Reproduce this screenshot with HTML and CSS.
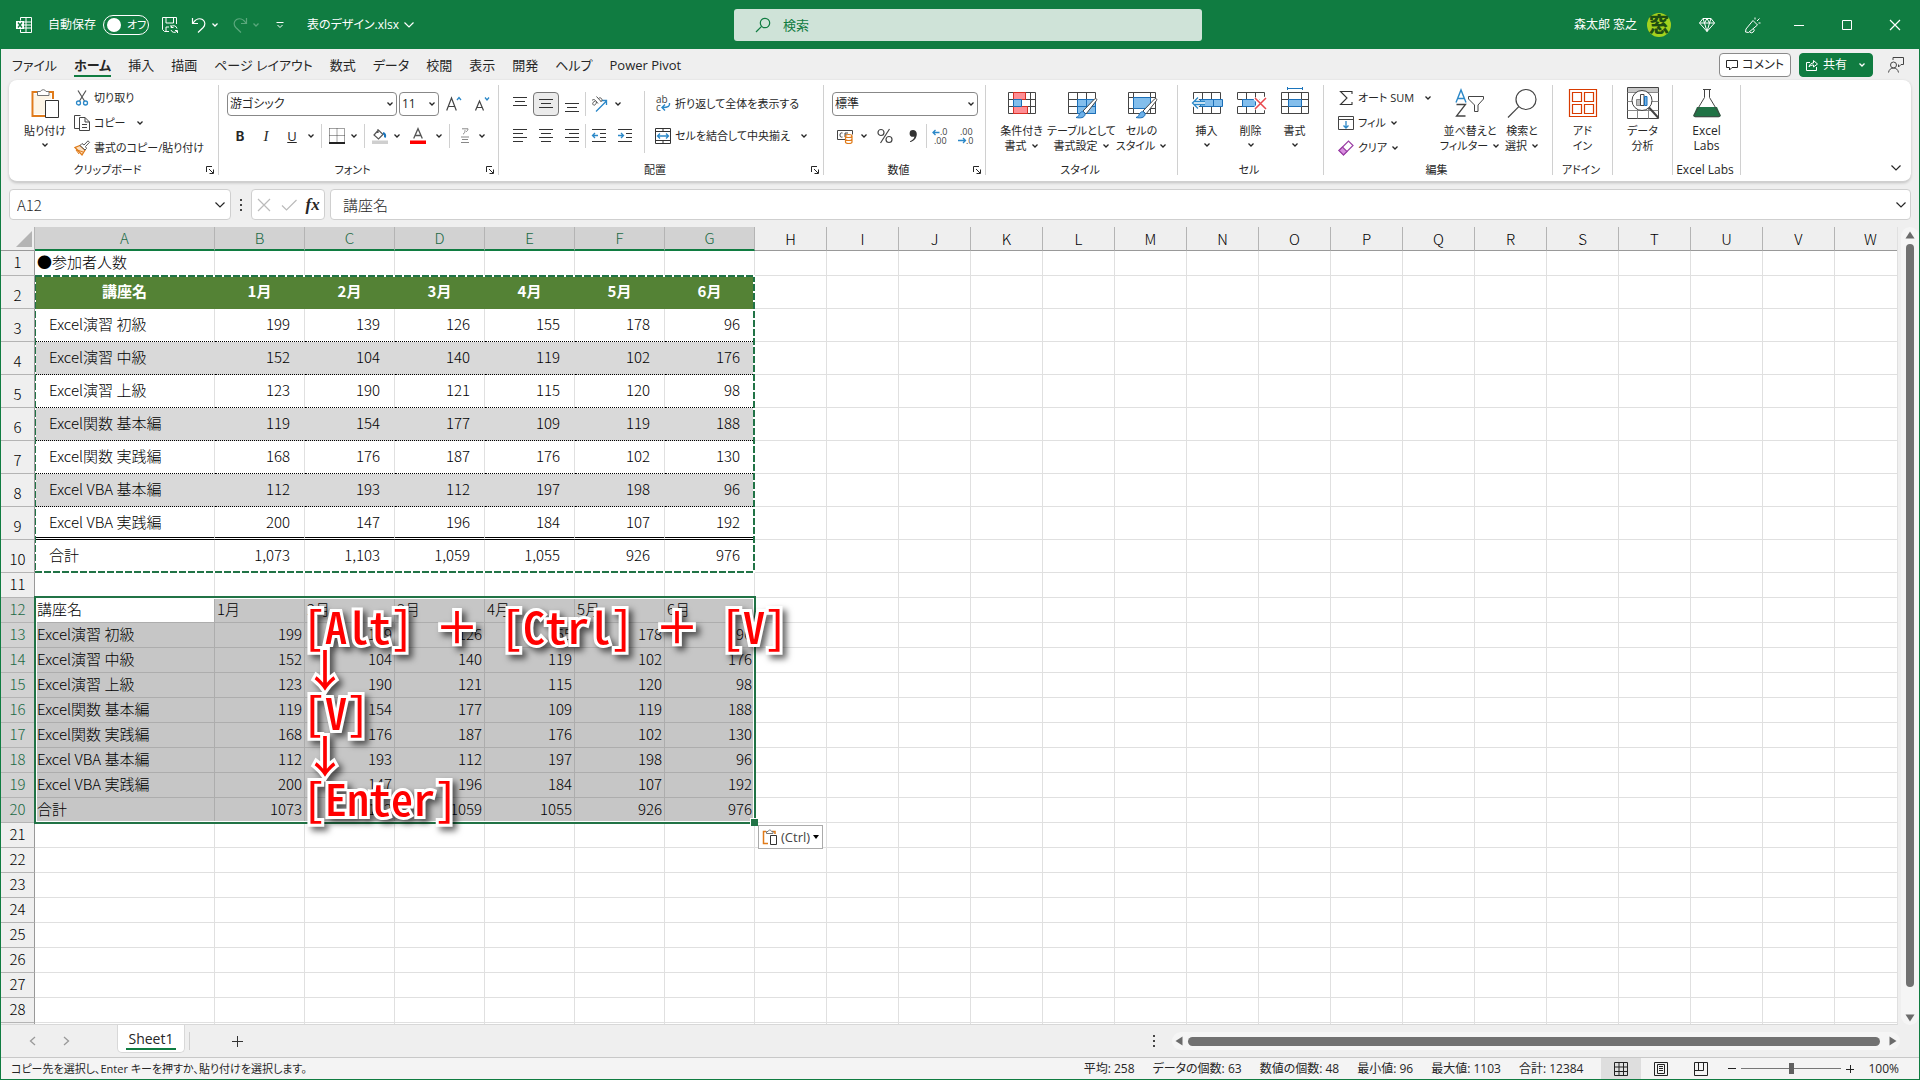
FILE: index.html
```html
<!DOCTYPE html>
<html lang="ja">
  <head>
    <meta charset="UTF-8">
    <meta name="viewport" content="width=device-width, initial-scale=1.0">
    <title>表のデザイン.xlsx</title>
    <link rel="stylesheet" href="styles.css">
  </head>
  <body>
    <!-- 共通アイコン -->
    <svg class="sprite" aria-hidden="true">
      <symbol id="chev" viewBox="0 0 8 8"><path d="M1.5 2.5 4 5l2.5-2.5" fill="none" stroke="currentColor" stroke-width="1.3"/></symbol>
      <symbol id="chev-l" viewBox="0 0 12 12"><path d="M1.5 3.5 6 8l4.5-4.5" fill="none" stroke="currentColor" stroke-width="1.2"/></symbol>
      <symbol id="launch" viewBox="0 0 8 8"><path d="M.5 6V.5H6M3 3l4 4M7.5 3.5v4h-4" fill="none" stroke="currentColor"/></symbol>
    </svg>

    <header class="titlebar">
      <div class="title-left">
        <svg class="i16" viewBox="0 0 16 16" fill="none" stroke="#fff"><path d="M4.500 3.500V.5h11v15h-11v-3M10 .5v15M4.500 5h11M6 8h9.500M4.500 11h11"/><path d="M0 4h8v8H0z" fill="#fff" stroke="none"/><path d="M2 5.500 6 10.500M6 5.500 2 10.500" stroke="#107c41" stroke-width="1.400"/></svg>
        <label class="autosave" for="autosave">自動保存
          <span class="switch"><input type="checkbox" id="autosave"><span class="knob"></span><span>オフ</span></span>
        </label>
        <button class="tb" aria-label="保存"><svg class="i16" viewBox="0 0 16 16" fill="none" stroke="#fff"><path d="M7 14.500H2.500l-2-2V.5h14V7M4 .5V6h7.500V.5M4 14.500V10h3"/><path d="M15 11.500a3.400 3.400 0 0 0-6-1.500M9 8v2.500h2.500M9 13a3.400 3.400 0 0 0 6 1M15.500 16v-2.500H13"/></svg></button>
        <button class="tb undo" aria-label="元に戻す"><svg class="i16" viewBox="0 0 16 16" fill="none" stroke="#fff" stroke-width="1.200"><path d="M1.500 1v5.500H7M1.800 6.300C5 1.500 9 1 11.500 2.500c3 2 3 5.500.7 8L7 15.500"/></svg><svg class="i8"><use href="#chev"/></svg></button>
        <button class="tb redo" aria-label="やり直し"><svg class="i16" viewBox="0 0 16 16" fill="none" stroke="currentColor" stroke-width="1.200"><path d="M14.500 1v5.500H9M14.200 6.300C11 1.500 7 1 4.500 2.500c-3 2-3 5.500-.7 8L9 15.500"/></svg><svg class="i8"><use href="#chev"/></svg></button>
        <button class="tb" aria-label="クイック アクセス"><svg class="i8" viewBox="0 0 8 8" fill="none" stroke="#fff"><path d="M.5 1.500h7M1.500 4 4 6.500 6.500 4"/></svg></button>
        <button class="tb filename">表のデザイン.xlsx<svg class="i12"><use href="#chev-l"/></svg></button>
      </div>
      <label class="search">
        <svg class="i16" viewBox="0 0 16 16" fill="none" stroke="#107c41" stroke-width="1.200"><circle cx="10" cy="6" r="4.700"/><path d="M6.600 9.400 1 15"/></svg>
        <input type="text" placeholder="検索" aria-label="検索">
      </label>
      <div class="title-right">
        <span class="user">森太郎 窓之</span>
        <span class="avatar">窓</span>
        <button class="tb cap" aria-label="プレミアム"><svg class="i16" viewBox="0 0 16 16" fill="none" stroke="#fff"><path d="M4 1.500h8L15.500 6 8 14.500.5 6zM.5 6h15M4 1.500 5.500 6 8 14.500 10.500 6 12 1.500M5.500 6 8 1.500 10.500 6"/></svg></button>
        <button class="tb cap" aria-label="新機能"><svg class="i16" viewBox="0 0 16 16" fill="none" stroke="#fff"><path d="M8 3.500 12.500 8 3.500 15.500.5 15l.5-3zM4.500 14.800a2.500 2.500 0 0 0 4-3.300M10 2.500V.5M12 4l2.500-2.500M13.500 6h2"/></svg></button>
        <button class="tb cap" aria-label="最小化"><svg class="i12" viewBox="0 0 12 12" stroke="#fff"><path d="M1 6.500h10"/></svg></button>
        <button class="tb cap" aria-label="元のサイズに戻す"><svg class="i12" viewBox="0 0 12 12" fill="none" stroke="#fff"><path d="M1.500 1.500h9v9h-9z"/></svg></button>
        <button class="tb cap" aria-label="閉じる"><svg class="i12" viewBox="0 0 12 12" stroke="#fff" stroke-width="1.200"><path d="M1 1l10 10M11 1 1 11"/></svg></button>
      </div>
    </header>

    <nav class="tabs">
      <a href="#">ファイル</a>
      <a href="#" class="on">ホーム</a>
      <a href="#">挿入</a>
      <a href="#">描画</a>
      <a href="#">ページ レイアウト</a>
      <a href="#">数式</a>
      <a href="#">データ</a>
      <a href="#">校閲</a>
      <a href="#">表示</a>
      <a href="#">開発</a>
      <a href="#">ヘルプ</a>
      <a href="#">Power Pivot</a>
      <div class="tabs-right">
        <button class="comment"><svg class="i12" viewBox="0 0 12 12" fill="none" stroke="currentColor"><path d="M.5 1.500h11v7H6L3.500 11V8.500h-3z"/></svg>コメント</button>
        <button class="share"><svg class="i12" viewBox="0 0 12 12" fill="none" stroke="currentColor"><path d="M4 3.500H.5v8h10V8M3 8c.5-3 2.500-4 4.500-4V1.500L11.500 5 7.500 8V6C5.500 6 4 6.500 3 8z"/></svg>共有<svg class="i8"><use href="#chev"/></svg></button>
        <button class="tb" aria-label="フィードバック"><svg class="i16" viewBox="0 0 16 16" fill="none" stroke="#444"><circle cx="5.500" cy="8" r="3"/><path d="M.5 15.500c.5-3 2.500-4.500 5-4.500s4.500 1.500 5 4.500M5 3V.5h10.500v7H13L10.500 10V7.500"/></svg></button>
      </div>
    </nav>

    <section class="ribbon">
      <div class="group g-clip">
        <div class="body">
          <button class="big paste"><svg class="i32" viewBox="0 0 32 32" fill="none"><path d="M9 5H3.500v24H16M20 5h4v7" stroke="#e07b1a" stroke-width="2"/><path d="M5 7h17v5h-6v15H5z" fill="#fdf5e6"/><path d="M8.500 8.500v-4h3a3 3 0 0 1 5.500 0h3v4z" fill="#fff" stroke="#777"/><path d="M16.500 13.500h13v17h-13z" fill="#fff" stroke="#333"/></svg><span>貼り付け</span><svg class="i8"><use href="#chev"/></svg></button>
          <div class="stack">
            <button class="row"><svg class="i16" viewBox="0 0 16 16" fill="none"><path d="M4 .5 10.500 11M12 .5 5.500 11" stroke="#555" stroke-width="1.200"/><circle cx="4.500" cy="13" r="2" stroke="#2b88c8" stroke-width="1.300"/><circle cx="11.500" cy="13" r="2" stroke="#2b88c8" stroke-width="1.300"/></svg>切り取り</button>
            <button class="row"><svg class="i16" viewBox="0 0 16 16" fill="#fff" stroke="#444"><path d="M5.500 13.500H.5V.5h6"/><path d="M5.500 2.500H11L15.500 7v8.500h-10zM11 2.500V7h4.500M8 9.500h5M8 12.500h5"/></svg>コピー<svg class="i8 near"><use href="#chev"/></svg></button>
            <button class="row"><svg class="i16" viewBox="0 0 16 16" fill="none"><path d="M1 7.500 8 15l3-5-5-4.500z" fill="#fbe0c0" stroke="#e07b1a" stroke-width="1.300"/><path d="M2 9.500 9 12M5 14l-3-4" stroke="#e07b1a"/><path d="M6 5.500 8 3.500l2 1.500L14 .8l1.500 1.500L11.500 6.500 12.500 8.500 11 10z" fill="#fff" stroke="#555"/></svg>書式のコピー/貼り付け</button>
          </div>
        </div>
        <div class="foot"><span>クリップボード</span><svg class="i8"><use href="#launch"/></svg></div>
      </div>

      <div class="group g-font">
        <div class="body rows">
          <div class="line combos">
            <div class="combo font-name"><select aria-label="フォント"><option>游ゴシック</option></select><svg class="i8"><use href="#chev"/></svg></div>
            <div class="combo font-size"><select aria-label="フォント サイズ"><option>11</option></select><svg class="i8"><use href="#chev"/></svg></div>
            <button class="ib" aria-label="フォント サイズの拡大"><svg class="i16" viewBox="0 0 16 16" fill="none"><path d="M.7 14.500 5.500 2l4.800 12.500M2.500 10.500h6" stroke="#444" stroke-width="1.200"/><path d="M11 4l2-2.500L15 4" stroke="#2b88c8" stroke-width="1.300"/></svg></button>
            <button class="ib" aria-label="フォント サイズの縮小"><svg class="i16" viewBox="0 0 16 16" fill="none"><path d="M1.500 14.500 5.500 5l4 9.500M3 11.500h5" stroke="#444" stroke-width="1.200"/><path d="M11 1.500l2 2.500 2-2.500" stroke="#2b88c8" stroke-width="1.300"/></svg></button>
          </div>
          <div class="line">
            <button class="ib"><b>B</b></button>
            <button class="ib"><i>I</i></button>
            <button class="ib"><u>U</u></button>
            <button class="drop" aria-label="下線"><svg class="i8"><use href="#chev"/></svg></button>
            <span class="sep"></span>
            <button class="ib mid" aria-label="罫線"><svg class="i16" viewBox="0 0 16 16" fill="none" stroke="#444"><path d="M.5.5h15v14M.5.5v14M8 .5v14M.5 7.500h15" stroke-dasharray="1 1"/><path d="M0 15h16" stroke="#222" stroke-width="2"/></svg></button>
            <button class="drop" aria-label="罫線の種類"><svg class="i8"><use href="#chev"/></svg></button>
            <span class="sep"></span>
            <button class="ib mid" aria-label="塗りつぶしの色"><svg class="i16" viewBox="0 0 16 16" fill="none"><path d="M6 1v4M6 2.500 2 7l4.500 4L11 6.500 7 2.500z" stroke="#555" stroke-width="1.200"/><path d="M11 5c2 .5 2.500 2 2 4.500" stroke="#1b75bc" stroke-width="2"/><path d="M0 12.500h16V16H0z" fill="#cfcfcf"/></svg></button>
            <button class="drop" aria-label="塗りつぶしの色の選択"><svg class="i8"><use href="#chev"/></svg></button>
            <button class="ib wide" aria-label="フォントの色"><svg class="i16" viewBox="0 0 16 16" fill="none"><path d="M3.700 10.500 8 .7l4.300 9.800M5 7.500h6" stroke="#555" stroke-width="1.300"/><path d="M0 12.500h16V16H0z" fill="#f00"/></svg></button>
            <button class="drop" aria-label="フォントの色の選択"><svg class="i8"><use href="#chev"/></svg></button>
            <span class="sep"></span>
            <button class="ib mid" aria-label="ふりがな"><svg class="i16" viewBox="0 0 16 16" fill="none" stroke="#888"><path d="M5 .8h6c0 1.500-1 2.500-2 3M8 2.200c0 2-.6 3.300-2 4M4 9h8M5 11.500h6M4 14.500h8"/></svg></button>
            <button class="drop" aria-label="ふりがなの設定"><svg class="i8"><use href="#chev"/></svg></button>
          </div>
        </div>
        <div class="foot"><span>フォント</span><svg class="i8"><use href="#launch"/></svg></div>
      </div>

      <div class="group g-align">
        <div class="body">
          <div class="rows">
            <div class="line">
              <button class="ib" aria-label="上揃え"><svg class="i16" viewBox="0 0 16 16" stroke="#333"><path d="M1 1.500h14M3 5.500h10M1 9.500h14"/></svg></button>
              <button class="ib pressed" aria-label="上下中央揃え"><svg class="i16" viewBox="0 0 16 16" stroke="#333"><path d="M1 3.500h14M3 7.500h10M1 11.500h14"/></svg></button>
              <button class="ib" aria-label="下揃え"><svg class="i16" viewBox="0 0 16 16" stroke="#333"><path d="M1 7.500h14M3 11.500h10M1 15.500h14"/></svg></button>
              <span class="sep"></span>
              <button class="ib" aria-label="方向"><svg class="i16" viewBox="0 0 16 16" fill="none"><path d="M5 15.500 15.500 5M11 4.500h4.500V9" stroke="#2b88c8" stroke-width="1.300"/><path d="M1 4.500c1-1.500 2.500-1 3.500 0L7 7.500M4.500 5C2.500 5.500 1 7 2 8.500s3 .5 3.500-2.500M5.500.5 10.500 6M7.500 2.500c2-2 5 1 2.500 3" stroke="#555"/></svg></button>
              <button class="drop" aria-label="方向の選択"><svg class="i8"><use href="#chev"/></svg></button>
            </div>
            <div class="line">
              <button class="ib" aria-label="左揃え"><svg class="i16" viewBox="0 0 16 16" stroke="#333"><path d="M1 1.500h14M1 5.500h10M1 9.500h14M1 13.500h10"/></svg></button>
              <button class="ib" aria-label="中央揃え"><svg class="i16" viewBox="0 0 16 16" stroke="#333"><path d="M1 1.500h14M3 5.500h10M1 9.500h14M3 13.500h10"/></svg></button>
              <button class="ib" aria-label="右揃え"><svg class="i16" viewBox="0 0 16 16" stroke="#333"><path d="M1 1.500h14M5 5.500h10M1 9.500h14M5 13.500h10"/></svg></button>
              <span class="sep"></span>
              <button class="ib" aria-label="インデントを減らす"><svg class="i16" viewBox="0 0 16 16" fill="none" stroke="#333"><path d="M1 1.500h14M9 5.500h6M9 9.500h6M1 13.500h14"/><path d="M7 7.500H1.500M4 5 1.500 7.500 4 10" stroke="#2b88c8" stroke-width="1.300"/></svg></button>
              <button class="ib" aria-label="インデントを増やす"><svg class="i16" viewBox="0 0 16 16" fill="none" stroke="#333"><path d="M1 1.500h14M9 5.500h6M9 9.500h6M1 13.500h14"/><path d="M1 7.500h5.500M4 5l2.500 2.500L4 10" stroke="#2b88c8" stroke-width="1.300"/></svg></button>
            </div>
          </div>
          <span class="sep tall"></span>
          <div class="rows wrap">
            <button class="row"><svg class="i16" viewBox="0 0 16 16" fill="none"><text x="1" y="7" font-size="10" fill="#444">ab</text><text x="1" y="15" font-size="10" fill="#444">c</text><path d="M14.500 7c.5 3-1 4.500-7 4.500M10 8.500l-3 3 3 3" stroke="#2b88c8" stroke-width="1.400"/></svg>折り返して全体を表示する</button>
            <button class="row"><svg class="i16" viewBox="0 0 16 16" fill="none" stroke="#333"><path d="M.5.5h15v15H.5zM.5 3.500h15M.5 12.500h15M8 .5v3M8 12.500v3"/><path d="M2.500 8h11M5 5.500 2.500 8 5 10.500M11 5.500 13.500 8 11 10.500" stroke="#2b88c8" stroke-width="1.300"/></svg>セルを結合して中央揃え<svg class="i8 near"><use href="#chev"/></svg></button>
          </div>
        </div>
        <div class="foot"><span>配置</span><svg class="i8"><use href="#launch"/></svg></div>
      </div>

      <div class="group g-num">
        <div class="body rows">
          <div class="line combos">
            <div class="combo"><select aria-label="表示形式"><option>標準</option></select><svg class="i8"><use href="#chev"/></svg></div>
          </div>
          <div class="line">
            <button class="ib" aria-label="通貨表示形式"><svg class="i16" viewBox="0 0 16 16" fill="none"><path d="M8 11.500H.5v-9h15v4" stroke="#444"/><path d="M5.500 5c-2-.5-2.500.5-2.500 2s.5 2.500 2.500 2M8 9V5h3M8 7h2" stroke="#444"/><path d="M8.500 8v6c0 2 6.500 2 6.500 0V8c0-2-6.500-2-6.500 0zM8.500 8c0 2 6.500 2 6.500 0M8.500 11c0 2 6.500 2 6.500 0" fill="#fff" stroke="#e07b1a" stroke-width="1.200"/></svg></button>
            <button class="drop" aria-label="通貨の選択"><svg class="i8"><use href="#chev"/></svg></button>
            <button class="ib wide" aria-label="パーセント スタイル"><svg class="i16" viewBox="0 0 16 16" fill="none" stroke="#444" stroke-width="1.200"><circle cx="4" cy="4.500" r="3"/><circle cx="12" cy="11.500" r="3"/><path d="M12.500 1 3.500 15"/></svg></button>
            <button class="ib" aria-label="桁区切りスタイル"><svg class="i16" viewBox="0 0 16 16"><path d="M8 2a3.400 3.400 0 0 0 0 6.800c.8 0 1.500-.3 1.500-.3C9 11 7 12.500 5 13.200v.8c4-.5 6.800-4 6.800-8C11.800 3.500 10 2 8 2z" fill="#333"/></svg></button>
            <span class="sep"></span>
            <button class="ib" aria-label="小数点以下の表示桁数を増やす"><svg class="i16" viewBox="0 0 16 16" fill="none"><text x="8" y="7" font-size="9" fill="#444">.0</text><text x="2" y="16" font-size="9" fill="#444">.00</text><path d="M7.500 4.500H1M3.500 2 1 4.500 3.500 7" stroke="#2b88c8" stroke-width="1.300"/></svg></button>
            <button class="ib" aria-label="小数点以下の表示桁数を減らす"><svg class="i16" viewBox="0 0 16 16" fill="none"><text x="2" y="7" font-size="9" fill="#444">.00</text><text x="8" y="16" font-size="9" fill="#444">.0</text><path d="M0 12.500h7.500M5 10l2.500 2.500L5 15" stroke="#2b88c8" stroke-width="1.300"/></svg></button>
          </div>
        </div>
        <div class="foot"><span>数値</span><svg class="i8"><use href="#launch"/></svg></div>
      </div>

      <div class="group g-style">
        <div class="body">
          <button class="big"><svg class="i32" viewBox="0 0 32 32" fill="none" stroke="#444"><path d="M2.500 5.500h27v21h-27zM2.500 12.500h27M2.500 19.500h27M24.500 5.500v21"/><path d="M7.500 5.500h12v7h-12zM7.500 19.500h14v7h-14z" fill="#ff8e94" stroke="#d93025"/><path d="M7.500 12.500h8v7h-8z" fill="#83beec" stroke="#1b6fb8"/></svg><span>条件付き<br>書式<svg class="i8"><use href="#chev"/></svg></span></button>
          <button class="big"><svg class="i32" viewBox="0 0 32 32" fill="none" stroke="#444"><path d="M2.500 5.500h27v21h-27zM2.500 12.500h27M2.500 19.500h27M11.500 5.500v21M20.500 5.500v21"/><path d="M11.500 12.500h18v14h-18zM11.500 19.500h18M20.500 12.500v14" fill="#83beec" stroke="#1b6fb8"/><path d="M17 24 28.500 12c1.500-1 3 0 2 1.500L20 27z" fill="#fff"/><path d="M10 30.500c3-.5 2.500-3 4.500-5s5.500 0 4.500 2.500-4 3.500-9 2.500z" fill="#6fb1e8" stroke="#1b6fb8"/></svg><span>テーブルとして<br>書式設定<svg class="i8"><use href="#chev"/></svg></span></button>
          <button class="big"><svg class="i32" viewBox="0 0 32 32" fill="none" stroke="#444"><path d="M2.500 5.500h27v21h-27zM2.500 10.500h27M2.500 21.500h27M7.500 5.500v21M24.500 5.500v21"/><path d="M7.500 10.500h17v11h-17z" fill="#83beec" stroke="#1b6fb8"/><path d="M17 24 28.500 12c1.500-1 3 0 2 1.500L20 27z" fill="#fff"/><path d="M10 30.500c3-.5 2.500-3 4.500-5s5.500 0 4.500 2.500-4 3.500-9 2.500z" fill="#6fb1e8" stroke="#1b6fb8"/></svg><span>セルの<br>スタイル<svg class="i8"><use href="#chev"/></svg></span></button>
        </div>
        <div class="foot"><span>スタイル</span></div>
      </div>

      <div class="group g-cell">
        <div class="body">
          <button class="big w44"><svg class="i32" viewBox="0 0 32 32" fill="none" stroke="#444"><path d="M2.500 5.500h27v21h-27zM2.500 12.500h27M2.500 19.500h27M11.500 5.500v21M20.500 5.500v21"/><path d="M9.500 12.500h22v7h-22zM22.500 12.500v7" fill="#83beec" stroke="#1b6fb8"/><path d="M14 16H2M7 10.500 1.500 16 7 21.500" stroke="#fff" stroke-width="4"/><path d="M14 14.500H3M14 17.500H3M7 10.500 1.500 16 7 21.500" stroke="#2b88c8" stroke-width="1.300"/></svg><span>挿入</span><svg class="i8"><use href="#chev"/></svg></button>
          <button class="big w44"><svg class="i32" viewBox="0 0 32 32" fill="none" stroke="#444"><path d="M2.500 12V5.500h27V11M2.500 20v6.500h27V23M2.500 12.500h22M2.500 19.500h20M11.500 5.500v21M20.500 5.500V12M20.500 20v6.500"/><path d="M7.500 12.500h13v7h-13z" fill="#83beec" stroke="#1b6fb8"/><path d="M20 11 31 22M31 11 20 22" stroke="#fff" stroke-width="4"/><path d="M20 11 31 22M31 11 20 22" stroke="#e8474c" stroke-width="1.500"/></svg><span>削除</span><svg class="i8"><use href="#chev"/></svg></button>
          <button class="big w44"><svg class="i32" viewBox="0 0 32 32" fill="none" stroke="#444"><path d="M2.500 5.500h27v21h-27zM2.500 12.500h27M2.500 19.500h27M9.500 5.500v21M22.500 5.500v21"/><path d="M9.500 12.500h13v7h-13z" fill="#83beec" stroke="#1b6fb8"/><path d="M8.500 0v3M23.500 0v3M8.500 1.500h15" stroke="#1b75bc"/></svg><span>書式</span><svg class="i8"><use href="#chev"/></svg></button>
        </div>
        <div class="foot"><span>セル</span></div>
      </div>

      <div class="group g-edit">
        <div class="body">
          <div class="stack">
            <button class="row"><svg class="i16" viewBox="0 0 16 16" fill="none" stroke="#333" stroke-width="1.100"><path d="M14 4V1.500H2.500L9 8l-6.500 6.500H14V12"/></svg>オート SUM<svg class="i8 near"><use href="#chev"/></svg></button>
            <button class="row"><svg class="i16" viewBox="0 0 16 16" fill="none" stroke="#444"><path d="M.5 1.500h15v13H.5zM.5 4.500h15"/><path d="M8 6v7M5.500 10.500 8 13l2.500-2.500" stroke="#2b88c8" stroke-width="1.300"/></svg>フィル<svg class="i8"><use href="#chev"/></svg></button>
            <button class="row"><svg class="i16" viewBox="0 0 16 16" fill="#fff" stroke="#9b3fa5" stroke-width="1.200"><path d="M1 10.500 10.500 1 15 5.500 5.500 15z"/><path d="M1 10.500 4.500 7 9 11.500 5.500 15z" fill="#d98fe0"/></svg>クリア<svg class="i8"><use href="#chev"/></svg></button>
          </div>
          <button class="big"><svg class="i32" viewBox="0 0 32 32" fill="none"><path d="M2 15.500 7 3l5 12.500M4 11.500h6" stroke="#2b88c8" stroke-width="1.400"/><path d="M2.500 17.500h9L2.500 29h9" stroke="#444" stroke-width="1.300"/><path d="M14.500 9.500h15v2.500l-5.500 6v6.500h-3.500V18l-6-6z" stroke="#444"/></svg><span>並べ替えと<br>フィルター<svg class="i8"><use href="#chev"/></svg></span></button>
          <button class="big w44"><svg class="i32" viewBox="0 0 32 32" fill="none" stroke="#444" stroke-width="1.200"><circle cx="20" cy="12.500" r="10"/><path d="M12.800 19.700 2 30.500"/></svg><span>検索と<br>選択<svg class="i8"><use href="#chev"/></svg></span></button>
        </div>
        <div class="foot"><span>編集</span></div>
      </div>

      <div class="group g-addin">
        <div class="body">
          <button class="big"><svg class="i32" viewBox="0 0 32 32" fill="none" stroke="#d83b01"><path d="M2.500 2.500h27v27h-27zM5.500 5.500h9v9h-9zM17.500 5.500h9v9h-9zM5.500 17.500h9v9h-9zM17.500 17.500h9v9h-9z" stroke-width="1.200"/></svg><span>アド<br>イン</span></button>
        </div>
        <div class="foot"><span>アドイン</span></div>
      </div>

      <div class="group g-addin">
        <div class="body">
          <button class="big"><svg class="i32" viewBox="0 0 32 32" fill="none" stroke="#444"><path d="M.5.500h31v31H.5z" fill="#fff"/><path d="M1 1h30v4H1z" fill="#c8c8c8" stroke="none"/><path d="M.5 5.500h31M.5 14.500h31M.5 23.500h31M10.500 5.500v26M21.500 5.500v26" stroke="#888"/><circle cx="15" cy="13.500" r="10" fill="#fff"/><path d="M22 20.500 31.500 31" stroke-width="2"/><path d="M9.500 12.500h4v6h-4z" fill="#bbb" stroke="#888"/><path d="M13.500 7.500h3.500v11h-3.500z"/><path d="M17.500 9.500H20v9h-2.500z" fill="#6fb1e8" stroke="#1b6fb8"/></svg><span>データ<br>分析</span></button>
        </div>
        <div class="foot"></div>
      </div>

      <div class="group g-labs">
        <div class="body">
          <button class="big"><svg class="i32" viewBox="0 0 32 32" fill="none"><path d="M6 20h20l3.500 8c.5 1-.5 2-1.500 2H4c-1 0-2-1-1.500-2z" fill="#217346"/><path d="M12 2.500h8M13.500 2.500v8L3 28c-.5 1 .3 1.800 1.500 1.800h23c1.200 0 2-.8 1.500-1.800L18.500 10.500v-8" stroke="#444"/></svg><span>Excel<br>Labs</span></button>
        </div>
        <div class="foot"><span>Excel Labs</span></div>
      </div>

      <button class="tb collapse" aria-label="リボンを折りたたむ"><svg class="i12"><use href="#chev-l"/></svg></button>
    </section>

    <section class="formula-bar">
      <div class="name-box"><input type="text" value="A12" aria-label="名前ボックス"><svg class="i12"><use href="#chev-l"/></svg></div>
      <svg class="dots" viewBox="0 0 3 12" fill="#444"><path d="M0 0h2v2H0zM0 5h2v2H0zM0 10h2v2H0z"/></svg>
      <div class="fx">
        <button class="tb" aria-label="キャンセル"><svg class="i16" viewBox="0 0 16 16" stroke="#bbb" stroke-width="1.200"><path d="M2 2l12 12M14 2 2 14"/></svg></button>
        <button class="tb" aria-label="入力"><svg class="i16" viewBox="0 0 16 16" fill="none" stroke="#bbb" stroke-width="1.200"><path d="M1 8.500 5.500 13 15.500 3"/></svg></button>
        <button class="tb fx-btn">fx</button>
      </div>
      <div class="formula"><input type="text" value="講座名" aria-label="数式バー"><svg class="i12"><use href="#chev-l"/></svg></div>
    </section>

    <main class="work">
      <div class="sheet">
        <table class="cells">
          <colgroup id="cols"></colgroup>
          <thead><tr id="heads"></tr></thead>
          <tbody id="rows"></tbody>
        </table>
        <div class="marquee"></div>
        <div class="selection"></div>
        <button class="paste-opt"><svg class="i16" viewBox="0 0 16 16" fill="none"><path d="M4 2.500H1.500v12H6M10 2.500h3V5" stroke="#e07b1a" stroke-width="1.500"/><path d="M4.500 4.500v-2h1.500c.5-2 3-2 3.500 0H11v2z" fill="#fff" stroke="#777"/><path d="M8.500 6.500h6v9h-6z" fill="#fff" stroke="#333"/></svg>(Ctrl)<svg class="tri" viewBox="0 0 6 4"><path d="M0 0h6L3 4z"/></svg></button>
        <div class="keys">
          <p>[Alt] <span>＋</span> [Ctrl] <span>＋</span> [V]</p>
          <p><span>↓</span></p>
          <p>[V]</p>
          <p><span>↓</span></p>
          <p>[Enter]</p>
        </div>
      </div>
      <div class="vscroll">
        <svg class="i10" viewBox="0 0 10 10"><path d="M5 1.500 9.500 8.500h-9z"/></svg>
        <span class="thumb"></span>
        <svg class="i10" viewBox="0 0 10 10"><path d="M.5 1.500h9L5 8.500z"/></svg>
      </div>
    </main>

    <div class="sheet-tabs">
      <div class="nav">
        <button class="tb" aria-label="前のシート"><svg class="i12" viewBox="0 0 12 12" fill="none" stroke="#999" stroke-width="1.300"><path d="M8 2 3.500 6 8 10"/></svg></button>
        <button class="tb" aria-label="次のシート"><svg class="i12" viewBox="0 0 12 12" fill="none" stroke="#999" stroke-width="1.300"><path d="M4 2l4.500 4L4 10"/></svg></button>
      </div>
      <a href="#" class="sheet-tab"><span>Sheet1</span></a>
      <span class="sep"></span>
      <button class="tb add" aria-label="新しいシート"><svg class="i12" viewBox="0 0 12 12" stroke="#333"><path d="M6.500 1v11M1 6.500h11"/></svg></button>
      <svg class="dots" viewBox="0 0 3 12" fill="#444"><path d="M0 0h2v2H0zM0 5h2v2H0zM0 10h2v2H0z"/></svg>
      <div class="hscroll">
        <svg class="i10" viewBox="0 0 10 10"><path d="M8.500.5v9L1.500 5z"/></svg>
        <span class="thumb"></span>
        <svg class="i10" viewBox="0 0 10 10"><path d="M1.500.5v9L8.500 5z"/></svg>
      </div>
    </div>

    <footer class="status">
      <span class="message">コピー先を選択し、Enter キーを押すか、貼り付けを選択します。</span>
      <span>平均: 258</span>
      <span>データの個数: 63</span>
      <span>数値の個数: 48</span>
      <span>最小値: 96</span>
      <span>最大値: 1103</span>
      <span>合計: 12384</span>
      <div class="views">
        <button class="tb on" aria-label="標準"><svg class="i14" viewBox="0 0 14 14" fill="none" stroke="#222"><path d="M.5.5h13v13H.5zM.5 5h13M.5 9.500h13M5 .5v13M9.500.5v13"/></svg></button>
        <button class="tb" aria-label="ページ レイアウト"><svg class="i14" viewBox="0 0 14 14" fill="none" stroke="#222"><path d="M.5.5h13v13H.5zM3.500 2.500h7v9h-7zM5 4.500h4M5 6.500h4M5 8.500h4"/></svg></button>
        <button class="tb" aria-label="改ページ プレビュー"><svg class="i14" viewBox="0 0 14 14" fill="none" stroke="#222"><path d="M.5.5h13v13H.5zM.5 8.500h9v-8M4.500.5v8"/></svg></button>
      </div>
      <div class="zoom">
        <button class="tb" aria-label="縮小"><svg class="i10" viewBox="0 0 10 10" stroke="#222"><path d="M1 4.500h8"/></svg></button>
        <input type="range" min="0" max="200" value="100" aria-label="ズーム">
        <button class="tb" aria-label="拡大"><svg class="i10" viewBox="0 0 10 10" stroke="#222"><path d="M1 5.500h8M5.500 1v8"/></svg></button>
        <span>100%</span>
      </div>
    </footer>
    <script src="script.js"></script>
  </body>
</html>
```

FILE: styles.css
```css
* {
  box-sizing: border-box;
  margin: 0;
  padding: 0;
}
body {
  display: flex;
  flex-direction: column;
  height: 100vh;
  overflow: hidden;
  border: 1px solid #107c41;
  border-top: 0;
  background-color: #efefef;
  color: #262626;
  font: 12px/16px "Open Sans", "Noto Sans CJK JP", sans-serif;
  font-feature-settings: "palt";
}
a {
  color: inherit;
  text-decoration: none;
}
button, input, select {
  border: 0;
  background: none;
  color: inherit;
  font: inherit;
  font-feature-settings: inherit;
  outline: none;
}
button {
  display: flex;
  align-items: center;
  white-space: nowrap;
}
svg {
  flex: none;
  overflow: visible;
}
.sprite {
  position: absolute;
  width: 0;
  height: 0;
}
.i8 { width: 8px; height: 8px; }
.i10 { width: 10px; height: 10px; }
.i12 { width: 12px; height: 12px; }
.i14 { width: 14px; height: 14px; }
.i16 { width: 16px; height: 16px; }
.i32 { width: 32px; height: 32px; }

/* タイトルバー */
.titlebar {
  display: grid;
  grid-template-columns: 1fr 468px 1fr;
  align-items: center;
  height: 49px;
  margin: 0 -1px;
  padding-left: 16px;
  background-color: #107c41;
  color: #fff;
}
.title-left, .title-right {
  display: flex;
  align-items: center;
  white-space: nowrap;
}
.autosave {
  display: flex;
  align-items: center;
  gap: 7px;
  margin: 0 13px 0 16px;
}
.switch {
  display: flex;
  align-items: center;
  gap: 6px;
  width: 46px;
  height: 20px;
  padding-left: 3px;
  border: 1px solid #fff;
  border-radius: 10px;
}
.switch input {
  display: none;
}
.switch .knob {
  flex: none;
  width: 14px;
  height: 14px;
  border-radius: 50%;
  background-color: #fff;
}
.switch span {
  font-size: 11px;
}
.tb {
  justify-content: center;
}
.undo, .redo {
  gap: 4px;
  margin-left: 13px;
}
.redo {
  margin-right: 16px;
  color: #5aa77c;
}
.filename {
  gap: 4px;
  margin-left: 23px;
}
.search {
  display: flex;
  align-items: center;
  gap: 12px;
  height: 32px;
  padding-left: 21px;
  border-radius: 3px;
  background-color: #cfe3d8;
  font-size: 13px;
}
.search input {
  flex: 1;
}
.search input::placeholder {
  color: #107c41;
  opacity: 1;
}
.title-right {
  justify-content: flex-end;
  padding-right: 1px;
}
.avatar {
  width: 24px;
  height: 24px;
  margin: 0 12px 0 10px;
  border-radius: 50%;
  background-color: #a4d21e;
  color: #1d4d12;
  font-size: 20px;
  font-weight: 900;
  line-height: 24px;
  text-align: center;
}
.cap {
  width: 48px;
  height: 32px;
}
.cap:nth-child(4) {
  width: 44px;
}

/* タブ */
.tabs {
  display: flex;
  align-items: center;
  gap: 17px;
  height: 31px;
  padding: 0 8px 0 11px;
  font-size: 13px;
}
.tabs a {
  height: 24px;
  line-height: 24px;
  white-space: nowrap;
}
.tabs .on {
  border-bottom: 2px solid #107c41;
  font-weight: 700;
}
.tabs-right {
  display: flex;
  gap: 8px;
  margin-left: auto;
  font-size: 12px;
}
.tabs-right .tb {
  width: 30px;
}
.comment, .share {
  gap: 4px;
  height: 24px;
  padding: 0 6px;
  border: 1px solid #8a8a8a;
  border-radius: 4px;
  background-color: #fff;
}
.share {
  gap: 5px;
  border-color: #107c41;
  background-color: #107c41;
  color: #fff;
}
.share .i8 {
  margin-left: 6px;
}

/* リボン */
.ribbon {
  display: flex;
  height: 102px;
  margin: 0 8px;
  padding: 5px 0;
  border-bottom: 1px solid #cfcfcf;
  border-radius: 8px;
  background-color: #fff;
  box-shadow: 0 1px 3px rgba(0, 0, 0, 0.2);
  font-size: 11px;
}
.group {
  display: flex;
  flex-direction: column;
  height: 90px;
  border-right: 1px solid #d0d0d0;
}
.g-clip { width: 210px; }
.g-font { width: 280px; }
.g-align { width: 325px; }
.g-num { width: 162px; }
.g-style { width: 192px; }
.g-cell { width: 146px; }
.g-edit { width: 229px; }
.g-addin { width: 60px; }
.g-labs {
  width: 68px;
  font-size: 12px;
}
.body {
  display: flex;
  flex: 1;
  padding-left: 8px;
}
.g-style .body, .g-cell .body, .g-addin .body, .g-labs .body {
  justify-content: center;
  padding-left: 0;
}
.foot {
  display: flex;
  align-items: center;
  height: 10px;
  padding-right: 3px;
}
.foot span {
  flex: 1;
  text-align: center;
  white-space: nowrap;
}
.foot .i8 {
  margin-right: 1px;
}
.big {
  flex-direction: column;
  align-items: center;
  gap: 4px;
  width: 60px;
  padding-top: 2px;
  line-height: 15px;
}
.big .i8 {
  margin-top: -1px;
}
.big span .i8 {
  margin-left: 4px;
}
.w44 { width: 44px; }
.paste {
  width: 56px;
  margin-right: 1px;
}
.stack {
  display: flex;
  flex-direction: column;
  height: 76px;
}
.row {
  flex: 1;
  gap: 4px;
}
.near {
  margin-left: 6px;
}
.rows {
  display: flex;
  flex-direction: column;
  gap: 8px;
  padding-top: 7px;
}
.line {
  display: flex;
  align-items: center;
  height: 24px;
}
.combos {
  gap: 2px;
}
.combo {
  display: grid;
  align-items: center;
  width: 146px;
  height: 24px;
  border: 1px solid #888;
  border-radius: 4px;
  font-size: 12px;
}
.font-name { width: 170px; }
.font-size { width: 40px; }
.combo select, .combo svg {
  grid-area: 1 / 1;
}
.combo select {
  height: 22px;
  padding-left: 2px;
  appearance: none;
}
.combo svg {
  justify-self: end;
  margin-right: 2px;
  pointer-events: none;
}
.ib {
  justify-content: center;
  width: 26px;
  height: 24px;
  font-size: 13px;
}
.ib b { font-family: Inter, sans-serif; }
.ib i { font-family: "Liberation Serif", serif; font-size: 15px; }
.mid { width: 22px; }
.wide { width: 30px; }
.pressed {
  border: 1px solid #777;
  border-radius: 4px;
  background-color: #ebebeb;
}
.drop {
  justify-content: center;
  width: 12px;
  height: 24px;
}
.sep {
  width: 1px;
  height: 24px;
  margin: 0 4px;
  background-color: #d0d0d0;
}
.g-align .sep, .g-num .sep {
  margin: 0;
}
.g-align .sep.tall {
  height: 62px;
  margin: 6px 10px 0 6px;
}
.wrap .row {
  flex: none;
  height: 24px;
}
.g-edit .body {
  padding-left: 14px;
}
.g-edit .stack {
  width: 102px;
}
.collapse {
  align-self: flex-end;
  margin: 0 9px 2px auto;
}

/* 数式バー */
.formula-bar {
  display: flex;
  align-items: center;
  gap: 5px;
  margin: 7px 8px;
  font-family: "Noto Sans CJK JP", sans-serif;
  font-size: 15px;
}
.name-box, .fx, .formula {
  display: flex;
  align-items: center;
  height: 31px;
  border: 1px solid #cfcfcf;
  border-radius: 4px;
  background-color: #fff;
}
.name-box {
  width: 222px;
  padding: 0 4px 0 7px;
}
.name-box input, .formula input {
  flex: 1;
  min-width: 0;
  font-weight: 300;
}
.dots {
  width: 3px;
  height: 12px;
  margin: 0 3px 0 4px;
}
.fx {
  justify-content: space-around;
  width: 74px;
}
.fx-btn {
  font: italic 700 17px "Liberation Serif", serif;
}
.formula {
  flex: 1;
  padding: 0 3px 0 12px;
}

/* シート */
.work {
  display: flex;
  flex: 1;
  min-height: 0;
  gap: 3px;
}
.sheet {
  position: relative;
  flex: 1;
  border-right: 1px solid #e0e0e0;
  border-bottom: 1px solid #d8d8d8;
  overflow: hidden;
}
.cells {
  width: 0;
  table-layout: fixed;
  border-collapse: separate;
  border-spacing: 0;
  font: 300 15px/22px "Noto Sans CJK JP", sans-serif;
  color: #000;
}
.c-head { width: 34px; }
.c-a { width: 180px; }
.c-data { width: 90px; }
.c-rest { width: 72px; }
.cells td {
  height: 25px;
  padding: 0 2px 2px 2px;
  border-right: 1px solid #e0e0e0;
  border-bottom: 1px solid #e0e0e0;
  background-color: #fff;
  white-space: nowrap;
}
.cells th {
  padding-bottom: 2px;
  border-right: 1px solid #b4b4b4;
  background-color: #efefef;
  font-weight: 300;
}
.cells thead th {
  height: 24px;
  padding-bottom: 0;
  border-bottom: 1px solid #999;
}
.cells thead .hit {
  border-bottom: 2px solid #107c41;
  background-color: #d2d2d2;
  color: #1c6a45;
}
.cells tbody th {
  border-right-color: #999;
  border-bottom: 1px solid #b4b4b4;
  vertical-align: bottom;
}
.cells tbody th.hit {
  background-color: #d2d2d2;
  color: #1c6a45;
}
.corner svg {
  display: block;
  width: 16px;
  height: 16px;
  margin-left: auto;
  margin-right: 2px;
}
.cells .tall td {
  height: 33px;
}
.cells .design {
  padding: 0 14px 2px;
  border-bottom: 1px dotted #000;
}
.cells .title {
  border-color: #548235;
  border-bottom-style: solid;
  background-color: #548235;
  color: #fff;
  font-weight: 700;
  text-align: center;
}
.cells .band {
  border-right-color: #d9d9d9;
  background-color: #d9d9d9;
}
.cells .last {
  padding-bottom: 0;
  border-bottom: 3px double #000;
}
.cells .total {
  padding-bottom: 4px;
  border-bottom: 0;
}
.cells .num {
  text-align: right;
}
.cells .sel {
  border-color: #adadad;
  background-color: #c6c6c6;
}
.cells .active {
  background-color: #fff;
}
.marquee {
  position: absolute;
  left: 34px;
  top: 48px;
  width: 720px;
  height: 298px;
  background:
    repeating-linear-gradient(90deg, #217346 0 7px, #fff 7px 9px) top / 100% 2px no-repeat,
    repeating-linear-gradient(90deg, #217346 0 7px, #fff 7px 9px) bottom / 100% 2px no-repeat,
    repeating-linear-gradient(#217346 0 7px, #fff 7px 9px) left / 1px 100% no-repeat,
    repeating-linear-gradient(#217346 0 7px, #fff 7px 9px) right / 2px 100% no-repeat;
}
.selection {
  position: absolute;
  left: 33px;
  top: 369px;
  width: 722px;
  height: 228px;
  border: 2px solid #217346;
  box-shadow: inset 0 0 0 1px #fff;
}
.selection::after {
  content: "";
  position: absolute;
  right: -4px;
  bottom: -4px;
  width: 7px;
  height: 7px;
  border: 1px solid #fff;
  border-right: 0;
  border-bottom: 0;
  background-color: #217346;
}
.paste-opt {
  position: absolute;
  left: 757px;
  top: 598px;
  gap: 3px;
  height: 24px;
  padding: 0 3px;
  border: 1px solid #ababab;
  background-color: #fff;
  color: #444;
  font-size: 13px;
}
.tri {
  width: 6px;
  height: 4px;
}
.keys {
  position: absolute;
  left: 302px;
  top: 377px;
  color: #f00;
  font: 500 44px/43px "Noto Sans CJK JP", monospace;
  font-feature-settings: "hwid";
  -webkit-text-stroke: 6px #fff;
  paint-order: stroke fill;
  filter: drop-shadow(4px 4px 3px rgba(0, 0, 0, 0.6));
}
.keys p {
  height: 43px;
  white-space: pre;
}
.keys span {
  font-feature-settings: normal;
}

/* スクロールバー */
.vscroll {
  display: flex;
  flex-direction: column;
  align-items: center;
  gap: 4px;
  width: 18px;
  padding: 3px 0 2px;
  border-radius: 9px;
  background-color: #f5f5f5;
}
.vscroll svg, .hscroll svg {
  fill: #6b6b6b;
}
.thumb {
  flex: 1;
  border-radius: 5px;
  background-color: #717171;
}
.vscroll .thumb {
  width: 8px;
  margin-bottom: 22px;
}
.sheet-tabs {
  display: flex;
  align-items: center;
  height: 32px;
  font-size: 14px;
}
.sheet-tabs .nav {
  display: flex;
  gap: 21px;
  width: 116px;
  padding-left: 26px;
}
.sheet-tab {
  align-self: flex-start;
  width: 68px;
  height: 28px;
  padding: 2px 8px 0;
  border: 1px solid #d8d8d8;
  border-top: 0;
  border-radius: 0 0 5px 5px;
  background-color: #fff;
  text-align: center;
}
.sheet-tab span {
  display: block;
  height: 23px;
  border-bottom: 2px solid #107c41;
  line-height: 24px;
}
.sheet-tabs .sep {
  height: 18px;
  background-color: #cfcfcf;
}
.add {
  margin-left: 37px;
}
.sheet-tabs .dots {
  margin: 0 16px 0 auto;
}
.hscroll {
  display: flex;
  align-items: center;
  gap: 4px;
  width: 728px;
  height: 18px;
  margin-right: 19px;
  padding: 0 2px;
  border-radius: 9px;
  background-color: #f5f5f5;
}
.hscroll .thumb {
  height: 9px;
  margin-right: 4px;
}

/* ステータスバー */
.status {
  display: flex;
  align-items: center;
  gap: 18px;
  height: 22px;
  padding: 0 20px 0 10px;
  border-top: 1px solid #c8c8c8;
  background-color: #f4f4f4;
  white-space: nowrap;
}
.message {
  margin-right: auto;
  font-size: 11px;
}
.views {
  display: flex;
  align-self: stretch;
}
.views .tb {
  width: 40px;
}
.views .on {
  background-color: #dedede;
}
.zoom {
  display: flex;
  align-items: center;
  gap: 4px;
  margin-left: -12px;
}
.zoom input {
  width: 100px;
  height: 12px;
  appearance: none;
  background: linear-gradient(#777, #777) center / 100% 1px no-repeat;
}
.zoom input::-webkit-slider-thumb {
  appearance: none;
  width: 5px;
  height: 11px;
  background-color: #606060;
}
.zoom span {
  margin-left: 9px;
}
```

FILE: script.js
```js
const letters = 'ABCDEFGHIJKLMNOPQRSTUVW'.split('');
const months = ['1月', '2月', '3月', '4月', '5月', '6月'];
const data = [
  ['Excel演習 初級', 199, 139, 126, 155, 178, 96],
  ['Excel演習 中級', 152, 104, 140, 119, 102, 176],
  ['Excel演習 上級', 123, 190, 121, 115, 120, 98],
  ['Excel関数 基本編', 119, 154, 177, 109, 119, 188],
  ['Excel関数 実践編', 168, 176, 187, 176, 102, 130],
  ['Excel VBA 基本編', 112, 193, 112, 197, 198, 96],
  ['Excel VBA 実践編', 200, 147, 196, 184, 107, 192],
  ['合計', 1073, 1103, 1059, 1055, 926, 976]
];
const table = [['講座名', ...months], ...data];

//  列の幅と見出し
let cols = '<col class="c-head">';
let heads = '<th class="corner"><svg viewBox="0 0 16 16"><path d="M16 0v16H0z" fill="#b4b4b4"/></svg></th>';
letters.forEach((letter, i) => {
  cols += `<col class="${i === 0 ? 'c-a' : i < 7 ? 'c-data' : 'c-rest'}">`;
  heads += `<th class="${i < 7 ? 'hit' : ''}">${letter}</th>`;
});
document.querySelector('#cols').innerHTML = cols;
document.querySelector('#heads').innerHTML = heads;

function cell(row, col) {
  if (row === 1 && col === 0) {
    return '<td>●参加者人数</td>';
  }
  //  書式付きの表
  if (row >= 2 && row <= 10 && col < 7) {
    const value = table[row - 2][col];
    let name = 'design';
    if (row === 2) name += ' title';
    else if (row === 10) name += ' total';
    else if (row === 9) name += ' last';
    else if (row % 2 === 0) name += ' band';
    if (typeof value === 'number') name += ' num';
    return `<td class="${name}">${value.toLocaleString('en-US')}</td>`;
  }
  //  値だけ貼り付けた表
  if (row >= 12 && row <= 20 && col < 7) {
    const value = table[row - 12][col];
    let name = 'sel';
    if (row === 12 && col === 0) name += ' active';
    if (typeof value === 'number') name += ' num';
    return `<td class="${name}">${value}</td>`;
  }
  return '<td></td>';
}

let rows = '';
for (let row = 1; row <= 29; row++) {
  const hit = row >= 12 && row <= 20 ? 'hit' : '';
  rows += `<tr class="${row >= 2 && row <= 10 ? 'tall' : ''}"><th class="${hit}">${row}</th>`;
  rows += letters.map((letter, col) => cell(row, col)).join('');
  rows += '</tr>';
}
document.querySelector('#rows').innerHTML = rows;
```
